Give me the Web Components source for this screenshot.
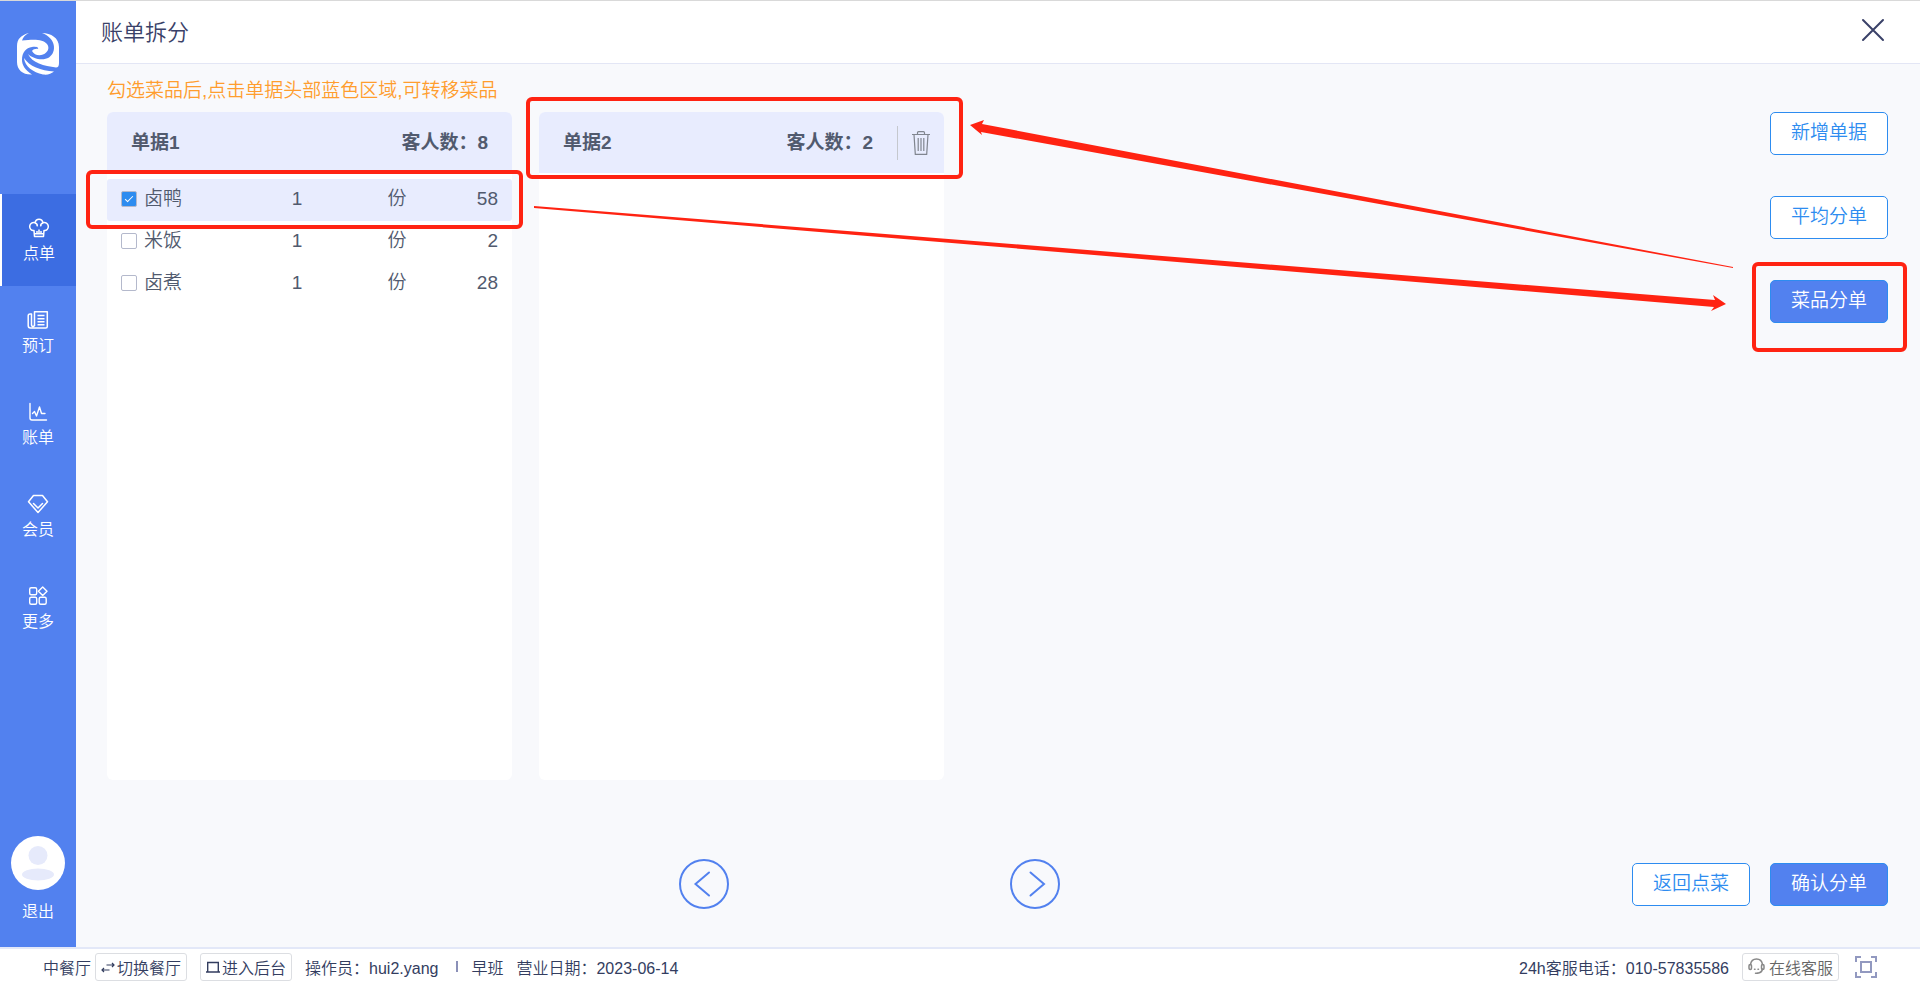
<!DOCTYPE html>
<html lang="zh-CN">
<head>
<meta charset="utf-8">
<title>账单拆分</title>
<style>
    html, body{
        margin: 0;
        height: 100%;
    }

    body{
        font-family: "Liberation Sans", "Noto Sans CJK SC", sans-serif;
        font-size: 19px;
        font-weight: 350;
        color: #515a6e;
    }
</style>
</head>
<body>

<split-app>
    <side-bar slot="side">
        <nav-item icon="chef" active>点单</nav-item>
        <nav-item icon="book">预订</nav-item>
        <nav-item icon="chart">账单</nav-item>
        <nav-item icon="diamond">会员</nav-item>
        <nav-item icon="more">更多</nav-item>
    </side-bar>

    <page-header slot="header">账单拆分</page-header>

    <bill-card slot="bills" name="单据1" guests="8" data-bill="1"></bill-card>
    <bill-card slot="bills" name="单据2" guests="2" data-bill="2" removable marked></bill-card>

    <action-button slot="actions">新增单据</action-button>
    <action-button slot="actions">平均分单</action-button>
    <action-button slot="actions" primary marked>菜品分单</action-button>

    <round-arrow slot="pager" direction="prev"></round-arrow>
    <round-arrow slot="pager" direction="next"></round-arrow>

    <action-button slot="confirm">返回点菜</action-button>
    <action-button slot="confirm" primary>确认分单</action-button>

    <status-bar slot="footer"></status-bar>
</split-app>

<script>
//svg icons by name
const icons = {
    chef: `<svg width="22" height="20" viewBox="0 0 22 20" fill="none" stroke="#fff" stroke-width="1.5" stroke-linejoin="round">
        <path d="M6 12.5C3.5 13 1.5 11 1.7 8.200C2 5.500 4.500 4 7 4.800C7.500 2.500 9 1.200 11 1.200S14.500 2.500 15 4.800C17.500 4 20 5.500 20.300 8.200C20.500 11 18.500 13 16 12.500L15.500 18.500H6.500Z"/>
        <path d="M7 5C8.800 5.400 9.500 6.500 9.200 8.300M15 5C13.200 5.400 12.500 6.500 12.800 8.300M6.500 15.800H15.500M9 15.500V13M11 15.500V11.500M13 15.500V13"/></svg>`,
    book: `<svg width="22" height="20" viewBox="0 0 22 20" fill="none" stroke="#fff" stroke-width="1.500" stroke-linejoin="round">
        <path d="M7.500 16V1.800H20.300V16.500Q20.300 18 18.800 18H3.500Q1.200 18 1.200 15.500V6Q1.200 4 3 4H4.500V14.500Q4.500 16.500 6 16.500Q7.500 16.500 7.500 14.500M10.500 5.500H17.500M10.500 8.700H17.500M10.500 11.700H17.500M10.500 14.700H17.500"/></svg>`,
    chart: `<svg width="20" height="20" viewBox="0 0 20 20" fill="none" stroke="#fff" stroke-width="1.400" stroke-linecap="round" stroke-linejoin="round">
        <path d="M2 1.500V16Q2 18 4 18H18.500M4.500 11.500L6.500 9.500L8.500 14L11.500 5L13.500 11.500H17"/></svg>`,
    diamond: `<svg width="22" height="20" viewBox="0 0 22 20" fill="none" stroke="#fff" stroke-width="1.500" stroke-linecap="round" stroke-linejoin="round">
        <path d="M6.500 1.500H15.500L20.500 7.800L11 18.500L1.500 7.800ZM6.500 9.500L11 14L15.500 9.500"/></svg>`,
    more: `<svg width="20" height="20" viewBox="0 0 20 20" fill="none" stroke="#fff" stroke-width="1.400" stroke-linejoin="round">
        <rect x="1.700" y="1.700" width="7" height="7" rx="1.500"/><rect x="1.700" y="11.200" width="7" height="7" rx="1.500"/>
        <rect x="11.200" y="11.200" width="7" height="7" rx="1.500"/><path d="M14.700 .9L19 5.200L14.700 9.500L10.400 5.200Z"/></svg>`,
    logo: `<svg width="42" height="42" viewBox="0 0 42 42" fill="#fff">
        <path d="M12 0C4 2 0 6 0 13V29C0 37 6 42 15 41.500C8 37 5 32 5 27C5 19 9 15 15 14C19 13.500 22 14.500 21 16C19 15.500 16 16.500 15 18C17 22 22 23 26 21.500C31 19.500 33 15 30 11C26 6 17 6 5 7.500C6 4 8 2 12 0Z"/>
        <path d="M25 0C34 0 42 5 42 14V30C42 33 41 34.500 39 34.500C27 33 15 30 11 21C16 26 26 28 32 24.500C40 19 39 5 25 0Z"/>
        <path d="M7 25C12 33 24 38 37 38.500C34 41 31 42 26 41.500C16 39 8 34 7 25Z"/></svg>`,
    avatar: `<svg width="54" height="54" viewBox="0 0 54 54"><circle cx="27" cy="27" r="27" fill="#fff"/>
        <circle cx="27" cy="19.500" r="9.500" fill="#e6eafb"/><ellipse cx="27" cy="38.500" rx="16" ry="6" fill="#e6eafb"/></svg>`,
    close: `<svg width="24" height="24" viewBox="0 0 24 24" stroke="#3a4168" stroke-width="2" stroke-linecap="round"><path d="M2 2L22 22M22 2L2 22"/></svg>`,
    trash: `<svg width="18" height="24" viewBox="0 0 18 24" fill="none" stroke="#80858f" stroke-width="1.200">
        <path d="M0 3.500H18M5.500 3.500V1.800Q5.500 .7 6.600 .7H11.400Q12.500 .7 12.500 1.800V3.500M2 3.500L3.300 23.300H14.700L16 3.500M6.200 7V20M9 7V20M11.800 7V20"/></svg>`,
    swap: `<svg width="14" height="14" viewBox="0 0 14 14" fill="none" stroke="#333d5f" stroke-width="1.200">
        <path d="M5.500 5H13M11 3L13 5L11 7M8.500 10H1M3 8L1 10L3 12"/></svg>`,
    desk: `<svg width="14" height="14" viewBox="0 0 14 14" fill="none" stroke="#333d5f" stroke-width="1.400">
        <path d="M1.700 11.500V2.500H12.300V11.500M0 12H14"/></svg>`,
    service: `<svg width="17" height="17" viewBox="0 0 17 17" fill="none" stroke="#888" stroke-width="1.500" stroke-linecap="round">
        <path d="M2.500 6.500C3 3 5.500 1 8.500 1S14 3 14.500 6.500M14.500 11C14 13.500 12 15 9.500 15.200"/>
        <rect x="1" y="6.500" width="2.500" height="5" rx="1.200"/><rect x="13.500" y="6.500" width="2.500" height="5" rx="1.200"/>
        <path d="M6.500 11.200H7M10 11.200H10.500M7.500 15.200H9.500"/></svg>`,
    full: `<svg width="22" height="22" viewBox="0 0 22 22" fill="none" stroke="#9299c0" stroke-width="2">
        <path d="M1 6V1H6M16 1H21V6M21 16V21H16M6 21H1V16"/><rect x="6" y="6" width="10" height="10"/></svg>`
};

//dishes of each bill
const dishes = {
    1: [
        {name: '卤鸭', amount: 1, unit: '份', price: 58, checked: true},
        {name: '米饭', amount: 1, unit: '份', price: 2},
        {name: '卤煮', amount: 1, unit: '份', price: 28}
    ],
    2: []
};

const plainButton = `
    button{
        padding: 0;
        border: 0;
        background: none;
        font: inherit;
        color: inherit;
        cursor: pointer;
    }

    svg{
        display: block;
        flex: none;
    }
`;

//attach an open shadow root filled from a template
const render = (host, html) => {
    const template = document.createElement('template');
    template.innerHTML = html;

    const shadowRoot = host.attachShadow({mode: 'open'});
    shadowRoot.appendChild(template.content.cloneNode(true));

    return shadowRoot;
}

class SplitApp extends HTMLElement{
    constructor() {
        super();

        render(this, `
        <style>
            :host{
                position: relative;
                box-sizing: border-box;
                display: flex;
                flex-direction: column;
                min-height: 100vh;
                border-top: 1px solid #d9d9d9;
                background-color: #f8f9fc;
            }

            .body{
                flex: 1;
                display: flex;
            }

            .page{
                flex: 1;
                display: flex;
                flex-direction: column;
            }

            main{
                flex: 1;
                display: flex;
                flex-direction: column;
                padding: 12px 32px 38px 31px;
            }

            .hint{
                margin: 0;
                line-height: 30px;
                color: #ff9d2e;
            }

            .work{
                flex: 1;
                display: flex;
                justify-content: space-between;
                margin-top: 6px;
            }

            .bills{
                display: flex;
                gap: 27px;
            }

            .actions{
                display: flex;
                flex-direction: column;
                gap: 41px;
            }

            .bottom{
                display: flex;
                align-items: center;
                margin-top: 79px;
            }

            .pager{
                flex: 1;
                display: flex;
                justify-content: center;
                gap: 281px;
            }

            .confirm{
                display: flex;
                gap: 20px;
            }

            .arrows{
                position: absolute;
                inset: 0;
                width: 100%;
                height: 100%;
                pointer-events: none;
            }
        </style>

        <div class="body">
            <slot name="side"></slot>
            <div class="page">
                <slot name="header"></slot>
                <main>
                    <p class="hint">勾选菜品后,点击单据头部蓝色区域,可转移菜品</p>
                    <div class="work">
                        <div class="bills"><slot name="bills"></slot></div>
                        <div class="actions"><slot name="actions"></slot></div>
                    </div>
                    <div class="bottom">
                        <div class="pager"><slot name="pager"></slot></div>
                        <div class="confirm"><slot name="confirm"></slot></div>
                    </div>
                </main>
            </div>
        </div>
        <slot name="footer"></slot>

        <svg class="arrows" viewBox="0 0 1920 985" preserveAspectRatio="none" fill="#ff2312">
            <path d="M970 124L984 119L982 123L1733 266V267L981 131L982 134Z"/>
            <path d="M534 206V207L1714 306L1711 310L1726 303L1713 294L1715 299L534 205Z"/>
        </svg>
        `);
    }
}

class SideBar extends HTMLElement{
    constructor() {
        super();

        render(this, `
        <style>
            ${plainButton}

            :host{
                display: flex;
                flex-direction: column;
                width: 76px;
                background-color: #5281ef;
                color: white;
                font-size: 16px;
            }

            .logo{
                display: flex;
                justify-content: center;
                padding: 32px 0 119px;
            }

            nav{
                flex: 1;
            }

            .exit{
                display: flex;
                flex-direction: column;
                align-items: center;
                gap: 10px;
                padding-bottom: 23px;
                line-height: 24px;
            }
        </style>

        <div class="logo">${icons.logo}</div>
        <nav><slot></slot></nav>
        <button class="exit">${icons.avatar}<span>退出</span></button>
        `);
    }
}

class NavItem extends HTMLElement{
    constructor() {
        super();

        render(this, `
        <style>
            :host{
                display: block;
            }

            a{
                box-sizing: border-box;
                display: flex;
                flex-direction: column;
                align-items: center;
                gap: 4px;
                height: 92px;
                padding-top: 24px;
                color: white;
                line-height: 24px;
                text-decoration: none;
            }

            :host([active]) a{
                border-left: 2px solid white;
                background-color: #3c6de2;
            }
        </style>

        <a href="#">${icons[this.getAttribute('icon')]}<span><slot></slot></span></a>
        `);
    }
}

class PageHeader extends HTMLElement{
    constructor() {
        super();

        render(this, `
        <style>
            ${plainButton}

            :host{
                display: flex;
                justify-content: space-between;
                align-items: center;
                height: 58px;
                padding: 0 35px 4px 25px;
                border-bottom: 1px solid #e3e6f5;
                background-color: white;
                color: #3a4168;
            }

            h1{
                margin: 0;
                font-size: 22px;
                font-weight: inherit;
            }
        </style>

        <h1><slot></slot></h1>
        <button aria-label="关闭">${icons.close}</button>
        `);
    }
}

class BillCard extends HTMLElement{
    constructor() {
        super();

        const name = this.getAttribute('name');
        const rows = dishes[this.dataset.bill].map((dish, i) => `
            <tr class="${dish.checked ? 'selected' : ''}">
                <td class="dish"><label><input type="checkbox" id="dish${i}" ${dish.checked ? 'checked' : ''}>${dish.name}</label></td>
                <td>${dish.amount}</td>
                <td>${dish.unit}</td>
                <td class="price">${dish.price}</td>
            </tr>`).join('');

        render(this, `
        <style>
            ${plainButton}

            :host{
                display: flex;
                flex-direction: column;
                width: 405px;
                border-radius: 6px;
                background-color: white;
            }

            header{
                position: relative;
                display: flex;
                align-items: center;
                height: 61px;
                border-radius: 6px 6px 0 0;
                background-color: #e8ecfe;
                font-weight: 700;
            }

            .name{
                flex: 1;
                padding: 0 0 4px 24px;
            }

            .guests{
                padding: 0 24px 4px 0;
            }

            .remove{
                padding: 5px 14px;
                border-left: 1px solid #c5c8ce;
            }

            table{
                width: 100%;
                margin-top: 6px;
                border-spacing: 0;
                table-layout: fixed;
            }

            .wide{
                width: 140px;
            }

            .mid{
                width: 100px;
            }

            tr{
                position: relative;
            }

            td{
                padding: 0 0 2px;
                line-height: 40px;
                text-align: center;
            }

            td.dish{
                padding-left: 14px;
                border-radius: 3px 0 0 3px;
            }

            td.price{
                padding-right: 14px;
                border-radius: 0 3px 3px 0;
                text-align: right;
            }

            .selected td{
                background-color: #e8ecfe;
            }

            label{
                display: flex;
                align-items: center;
                gap: 7px;
            }

            input{
                appearance: none;
                box-sizing: border-box;
                width: 16px;
                height: 16px;
                margin: 0;
                border: 1px solid #b4b9cc;
                border-radius: 2px;
                background-color: white;
            }

            input:checked{
                display: grid;
                place-items: center;
                background-color: #2d8cf0;
            }

            input:checked::after{
                content: "";
                width: 7px;
                height: 3px;
                margin-bottom: 3px;
                border: solid white;
                border-width: 0 0 1px 1px;
                transform: rotate(-45deg);
            }

            /* red highlight frames */
            .selected .dish::after, :host([marked]) header::after{
                content: "";
                position: absolute;
                border: 4px solid #ff2312;
                border-radius: 6px;
                pointer-events: none;
            }

            .selected .dish::after{
                inset: -9px -11px -8px -21px;
            }

            :host([marked]) header::after{
                inset: -15px -19px -6px -13px;
            }
        </style>

        <header>
            <span class="name">${name}</span>
            <span class="guests">客人数：${this.getAttribute('guests')}</span>
            ${this.hasAttribute('removable') ? `<button class="remove" aria-label="删除${name}">${icons.trash}</button>` : ''}
        </header>
        <table aria-label="${name}">
            <colgroup><col class="wide"><col class="mid"><col class="mid"><col></colgroup>
            <tbody>${rows}</tbody>
        </table>
        `);

        //row highlight follows its checkbox
        this.shadowRoot.querySelectorAll('input').forEach(input => {
            input.addEventListener('change', () => {
                input.closest('tr').classList.toggle('selected', input.checked);
            });
        });
    }
}

class ActionButton extends HTMLElement{
    constructor() {
        super();

        render(this, `
        <style>
            ${plainButton}

            :host{
                position: relative;
                display: block;
            }

            button{
                display: block;
                width: 118px;
                padding: 6px 0 7px;
                border: 1px solid #2d8cf0;
                border-radius: 5px;
                background-color: white;
                color: #2d8cf0;
                line-height: 28px;
            }

            :host([primary]) button{
                background-color: #5281ef;
                color: white;
            }

            /* red highlight frame */
            :host([marked])::after{
                content: "";
                position: absolute;
                inset: -18px -19px -29px -18px;
                border: 4px solid #ff2312;
                border-radius: 6px;
                pointer-events: none;
            }
        </style>

        <button><slot></slot></button>
        `);
    }
}

class RoundArrow extends HTMLElement{
    constructor() {
        super();

        const isNext = this.getAttribute('direction') == 'next';

        render(this, `
        <style>
            ${plainButton}

            :host, button{
                display: block;
            }
        </style>

        <button aria-label="${isNext ? '下一页' : '上一页'}">
            <svg width="50" height="50" viewBox="0 0 50 50" fill="none" stroke="#5281ef" stroke-width="2" stroke-linecap="round">
                <circle cx="25" cy="25" r="24"/>
                <path d="${isNext ? 'M20.500 13.500L34 25L20.500 36.500' : 'M30 13.500L16.500 25L30 36.500'}"/>
            </svg>
        </button>
        `);
    }
}

class StatusBar extends HTMLElement{
    constructor() {
        super();

        render(this, `
        <style>
            ${plainButton}

            :host{
                display: flex;
                align-items: center;
                height: 35px;
                padding: 0 43px 2px;
                border-top: 2px solid #e3e8f8;
                background-color: white;
                color: #333d5f;
                font-size: 16px;
                white-space: nowrap;
            }

            .left{
                flex: 1;
                display: flex;
                align-items: center;
                gap: 13px;
            }

            .place, .right{
                display: flex;
                align-items: center;
            }

            .place{
                gap: 4px;
            }

            .right{
                gap: 13px;
            }

            .box{
                display: flex;
                align-items: center;
                gap: 2px;
                height: 28px;
                box-sizing: border-box;
                padding: 0 5px;
                border: 1px solid #dcdee2;
                border-radius: 3px;
            }

            .online{
                gap: 4px;
                color: #666;
            }

            .bar{
                width: 2px;
                height: 11px;
                margin: 0 0 0 5px;
                background-color: #8b90b8;
            }

            .full{
                margin-left: 3px;
            }
        </style>

        <div class="left">
            <div class="place">
                <span>中餐厅</span>
                <button class="box">${icons.swap}切换餐厅</button>
            </div>
            <button class="box">${icons.desk}进入后台</button>
            <span>操作员：hui2.yang</span>
            <span class="bar"></span>
            <span>早班</span>
            <span>营业日期：2023-06-14</span>
        </div>
        <div class="right">
            <span>24h客服电话：010-57835586</span>
            <button class="box online">${icons.service}在线客服</button>
            <button class="full" aria-label="全屏">${icons.full}</button>
        </div>
        `);
    }
}

customElements.define("split-app", SplitApp);
customElements.define("side-bar", SideBar);
customElements.define("nav-item", NavItem);
customElements.define("page-header", PageHeader);
customElements.define("bill-card", BillCard);
customElements.define("action-button", ActionButton);
customElements.define("round-arrow", RoundArrow);
customElements.define("status-bar", StatusBar);
</script>
</body>
</html>
